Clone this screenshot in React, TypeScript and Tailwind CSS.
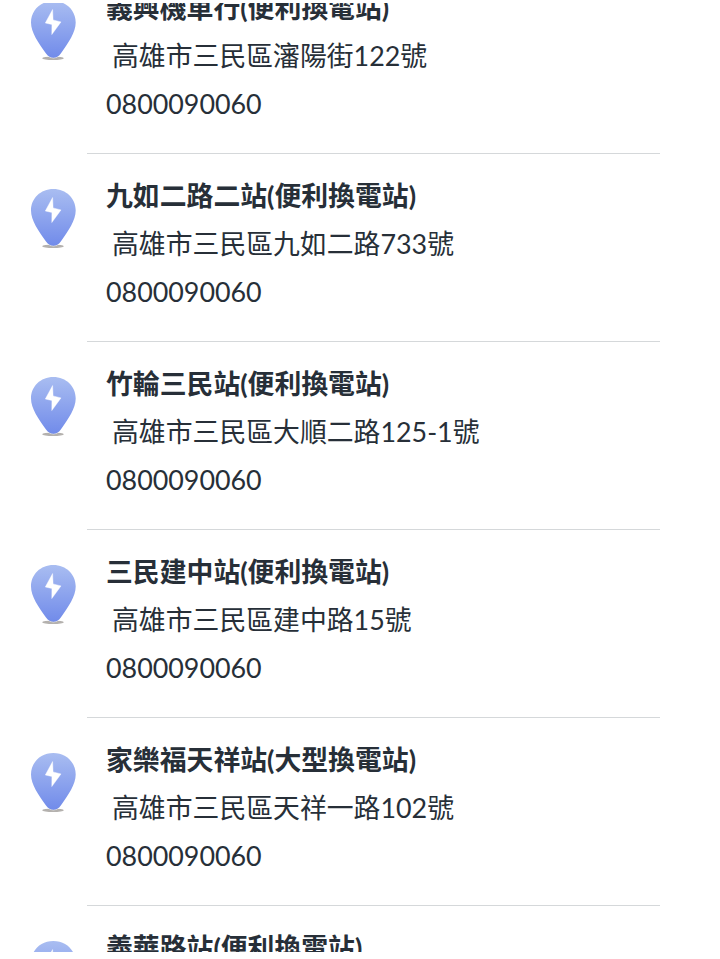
import { useId } from "react";

interface Station {
  name: string;
  address?: string;
  phone?: string;
}

const stations: Station[] = [
  { name: "義興機車行(便利換電站)", address: "高雄市三民區瀋陽街122號", phone: "0800090060" },
  { name: "九如二路二站(便利換電站)", address: "高雄市三民區九如二路733號", phone: "0800090060" },
  { name: "竹輪三民站(便利換電站)", address: "高雄市三民區大順二路125-1號", phone: "0800090060" },
  { name: "三民建中站(便利換電站)", address: "高雄市三民區建中路15號", phone: "0800090060" },
  { name: "家樂福天祥站(大型換電站)", address: "高雄市三民區天祥一路102號", phone: "0800090060" },
  { name: "義華路站(便利換電站)" },
];

const StationPin = () => {
  const id = useId();

  return (
    <svg width="48" height="62" viewBox="0 0 48 62" className="shrink-0">
      <defs>
        <linearGradient id={`${id}-pin`} x1="0" y1="0" x2="0" y2="1">
          <stop offset="0" stopColor="#a9bdf1" />
          <stop offset="1" stopColor="#718bea" />
        </linearGradient>
        <filter id={`${id}-shadow`} x="-20%" y="-60%" width="140%" height="220%">
          <feGaussianBlur stdDeviation="0.6" />
        </filter>
      </defs>
      <ellipse cx="24" cy="58.2" rx="10.8" ry="1.7" fill="#b4b1ae" filter={`url(#${id}-shadow)`} />
      <path
        d="M24.300 1C11.500 1 2 10.500 2 22.500C2 32.500 9.300 42.500 17 53.500C21.200 59.300 27.700 59.300 31.800 53.500C39.400 42.500 46.700 32.500 46.700 22.500C46.700 10.500 37.300 1 24.300 1Z"
        fill={`url(#${id}-pin)`}
        stroke="#fff"
        strokeWidth="0.8"
        paintOrder="stroke"
      />
      <path
        d="M23.600 9.500L16.300 23L22.900 24.500L22.800 34.600L32 21.900L24.100 19.900Z"
        fill="#fff"
        stroke="#fff"
        strokeWidth="0.4"
        strokeLinejoin="round"
      />
    </svg>
  );
};

const StationRow = ({ station }: { station: Station }) => (
  <li className="flex h-[188px] pl-[29px]">
    <div className="w-[58px] shrink-0 pt-[34px]">
      <StationPin />
    </div>
    <div className="w-[573px] border-b border-[#d5d8da] pt-[18px] pl-[19px] text-[26.85px] leading-[48px] whitespace-nowrap">
      <h2 className="font-bold">{station.name}</h2>
      {station.address && <p className="pl-[6px]">{station.address}</p>}
      {station.phone && <p>{station.phone}</p>}
    </div>
  </li>
);

const App = () => {
  return (
    <main className="h-[959px] overflow-hidden bg-white py-[3px] font-[Lato,'Noto_Sans_CJK_TC',sans-serif] text-[#272f38]">
      <div className="h-[949px] overflow-hidden">
        <ul className="-mt-[37px]">
          {stations.map((station) => (
            <StationRow key={station.name} station={station} />
          ))}
        </ul>
      </div>
    </main>
  );
};

export default App;
